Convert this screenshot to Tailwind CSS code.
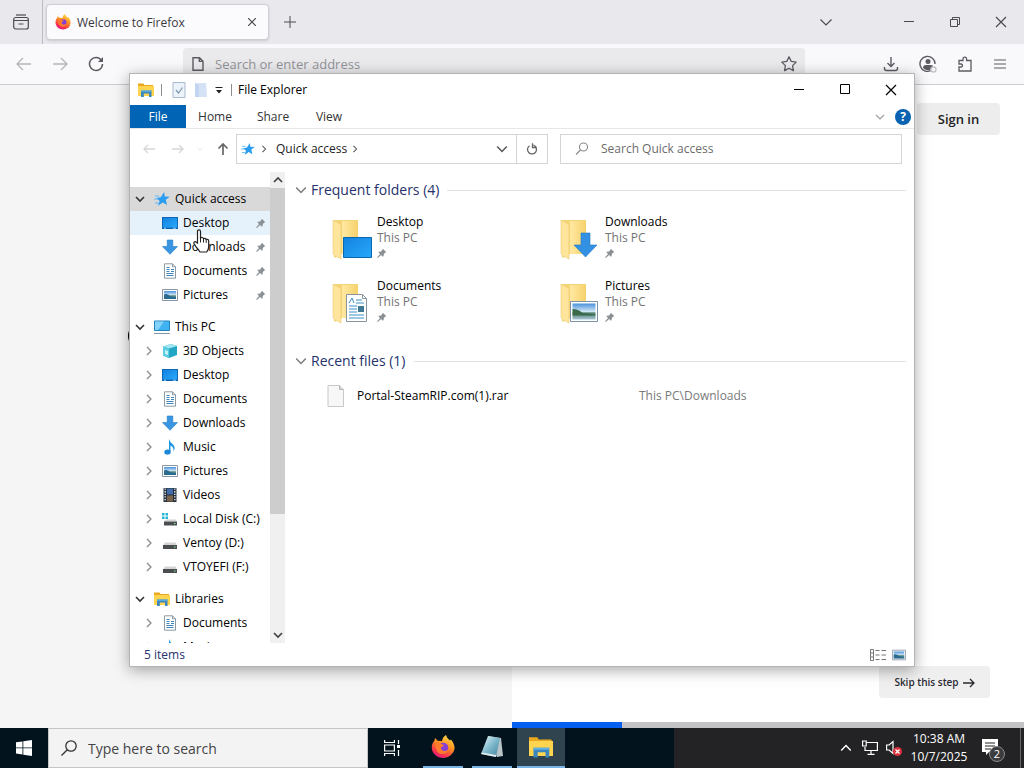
<!DOCTYPE html>
<html lang="en">
<head>
    <meta charset="UTF-8">
    <meta name="viewport" content="width=device-width, initial-scale=1.0">
    <title>Desktop</title>
    <script src="https://cdn.jsdelivr.net/npm/@tailwindcss/browser@4"></script>
</head>
<body class="h-screen overflow-hidden flex flex-col relative font-['Open_Sans',sans-serif] text-xs text-black bg-white">

    <!-- shared icons -->
    <svg class="absolute size-0" aria-hidden="true">
        <linearGradient id="blue" x1="0" y1="0" x2="1" y2="1"><stop offset="0" stop-color="#1482e0"/><stop offset="1" stop-color="#27a9fb"/></linearGradient>
        <linearGradient id="folder" x1="0" y1="0" x2="1" y2="0"><stop offset="0" stop-color="#ffe9a2"/><stop offset="1" stop-color="#f6d16b"/></linearGradient>
        <linearGradient id="sky" x1="0" y1="0" x2="0" y2="1"><stop offset="0" stop-color="#4a90dc"/><stop offset=".5" stop-color="#cfe6f5"/><stop offset=".6" stop-color="#4d7f6c"/><stop offset="1" stop-color="#a9c6d8"/></linearGradient>
        <linearGradient id="fire" x1=".8" y1="0" x2=".3" y2="1"><stop offset="0" stop-color="#ffe04a"/><stop offset=".45" stop-color="#ff9020"/><stop offset=".8" stop-color="#f8344c"/><stop offset="1" stop-color="#e31587"/></linearGradient>
        <linearGradient id="pad" x1="0" y1="0" x2="1" y2="1"><stop offset="0" stop-color="#f2fbfd"/><stop offset=".5" stop-color="#7eb9cc"/><stop offset="1" stop-color="#3f8199"/></linearGradient>
        <symbol id="i-star" viewBox="0 0 16 16"><path d="M10.200 1l.5 4.400 5 .3-3.900 3 1.200 5.300-4.200-2.600L4 14.800l1.700-4.900L2.500 7l4.200-.8z" fill="#2b9df0"/><path d="M1 5h4M0 8h4M1 12h4" stroke="#5eb5f3"/></symbol>
        <symbol id="i-desktop" viewBox="0 0 16 16"><path d="M0 2h16v12H0z" fill="#0d67b4"/><path d="M1 3h14v9.500H1z" fill="url(#blue)"/><path d="M2 13.200h2M11 13.200h3" stroke="#9bd2fa"/></symbol>
        <symbol id="i-downloads" viewBox="0 0 16 16"><path d="M5.200 1h5.600v6.500h4.700L8 15.300.5 7.500h4.700z" fill="#3a96e2" stroke="#2479c6" stroke-width=".6"/></symbol>
        <symbol id="i-documents" viewBox="0 0 16 16"><path d="M2.500.8h8l3 3v11.400h-11z" fill="#fff" stroke="#8c9aa5"/><path d="M10.500.8v3h3" fill="none" stroke="#8c9aa5"/><path d="M4.500 4.500h3M4.500 6.500h3M9 6.500h3M4.500 8.500h3M9 8.500h3M4.500 10.500h7M4.500 12.500h7" stroke="#3c87c2"/></symbol>
        <symbol id="i-pictures" viewBox="0 0 16 16"><path d="M.5 2.500h15v11H.5z" fill="#fff" stroke="#8a98a4"/><path d="M2 4h12v8H2z" fill="url(#sky)"/><path d="M2 7.500q3-1.500 6 1.500l6 1v2H2z" fill="#2c6c91"/></symbol>
        <symbol id="i-pc" viewBox="0 0 16 16"><path d="M.5 2h15v9.500H.5z" fill="#41b3f3" stroke="#2184bd"/><path d="M1 2.500h9l-6 8.500H1z" fill="#83d2fa"/><path d="M0 14.500h16" stroke="#8294a2"/></symbol>
        <symbol id="i-cube" viewBox="0 0 16 16"><path d="M1 3.500L9 1l6 2v9l-8 3-6-2.500z" fill="#21a6c4"/><path d="M1 3.500L9 1l6 2-8 2.500z" fill="#a3e6f2"/><path d="M1 3.500l6 2V15l-6-2.500z" fill="#5bcde3"/><path d="M3 7l3 1v4l-3-1z" fill="#c3f1f8"/></symbol>
        <symbol id="i-music" viewBox="0 0 16 16"><path d="M7 0q1 3.500 4 5.500 3 3 .5 7 .5-4.500-3-6V13H7z" fill="#2196e3"/><ellipse cx="5.500" cy="13" rx="3.200" ry="2.600" fill="#1b87d8"/></symbol>
        <symbol id="i-videos" viewBox="0 0 16 16"><path d="M1.500 1h13v14h-13z" fill="#27303c"/><path d="M5 1.500h6v6H5z" fill="#426dab"/><path d="M5 8.500h6v6H5z" fill="#7a654a"/><path d="M3.200 1.500v13M12.800 1.500v13" stroke="#dfe6ee" stroke-width="1.400" stroke-dasharray="1.300 1.300"/></symbol>
        <symbol id="i-drive" viewBox="0 0 16 16"><path d="M3 7.500h10.500l1.500 3H1z" fill="#d3d3d3"/><path d="M1 10h14v4H1z" fill="#4b4e50"/><path d="M12 12h1.500" stroke="#7ff09a"/></symbol>
        <symbol id="i-disk" viewBox="0 0 16 16"><path d="M4 8.500h9.500l1.500 2H2z" fill="#d3d3d3"/><path d="M2 10.500h13v4H2z" fill="#4b4e50"/><path d="M12 12.500h1.500" stroke="#7ff09a"/><path d="M0 2h2.500v2.500H0zM3.500 2H6v2.500H3.500zM0 5.500h2.500V8H0zM3.500 5.500H6V8H3.500z" fill="#20b4d4"/></symbol>
        <symbol id="i-explorer" viewBox="0 0 16 16"><path d="M0 1.500h5.500l1 1.500H15v11H0z" fill="#e9a820"/><path d="M0 4h16v10H0z" fill="#ffd44f"/><path d="M3 8.500h10.500V15H11v-3.500H5.800V15H3z" fill="#3b86bd"/><path d="M3 8.500h10.500v1.300H3z" fill="#5fb3e6"/></symbol>
        <symbol id="i-pin" viewBox="0 0 12 12"><path d="M7 .8l4.200 4.200-1.200.5-1.800 1.800-.3 2.400-1 .8-2-2L1 12l-.8-.8L3.600 7.200l-2-2 .9-.8 2.400-.3L6.500 2.200z" fill="#8b9095"/></symbol>
        <symbol id="i-down" viewBox="0 0 10 10"><path d="M1 3l4 4 4-4" fill="none" stroke="currentColor" stroke-width="1.200"/></symbol>
        <symbol id="i-right" viewBox="0 0 10 10"><path d="M3 1l4 4-4 4" fill="none" stroke="currentColor" stroke-width="1.300"/></symbol>
        <symbol id="i-close" viewBox="0 0 12 12"><path d="M1 1l10 10M11 1L1 11" fill="none" stroke="currentColor" stroke-width="1.200"/></symbol>
        <symbol id="i-firefox" viewBox="0 0 24 24"><path d="M15 0q1 4 4 5.500l1-1q4 5 3.500 9.500A11.500 10.800 0 0 1 1 15Q0 9 3.500 5.500L4 3l3 3q2-.6 4 .2Q11.500 2 15 0z" fill="url(#fire)"/><circle cx="12.300" cy="12.800" r="5" fill="#8440d5"/><path d="M4 9q4-3 7 .5l2 .3q-.5 2-3 2.500-.5 3 3 3.700 4 0 5-3.500-.5 6-6.500 6.500Q5 19 4 9z" fill="#ff7a2c"/></symbol>
        <symbol id="i-folder" viewBox="0 0 28 42"><path d="M2 2h24v34H10L2 40z" fill="#f5d477"/><path d="M10 3h16v33H10z" fill="url(#folder)"/><path d="M1 2l7 4q1 1 1 3v32l-6-3q-2-1-2-3z" fill="#ffe59b" stroke="#eccb73" stroke-width=".6"/></symbol>
    </svg>

    <!-- Browser -->
    <div class="flex-1 min-h-0 flex flex-col">
        <header class="h-11 shrink-0 bg-[#e9e8ed] flex items-center text-[#4a4a50]">
            <button class="w-[43px] h-11 border-r border-[#bdbcc4] flex items-center justify-center" aria-label="Firefox View">
                <svg class="size-4" viewBox="0 0 16 16" fill="none" stroke="currentColor" stroke-width="1.200"><path d="M3 1h10"/><rect x=".7" y="3.500" width="14.600" height="11.500" rx="2"/><path d="M1 6.500h14M5.500 10h5"/></svg>
            </button>
            <div class="ml-[3px] w-[223px] h-9 px-2 rounded bg-[#fbfbfd] border border-[#cfced5] shadow-sm flex items-center gap-1.5">
                <svg class="size-4"><use href="#i-firefox"/></svg>
                <span class="flex-1 pt-px text-[#3a3a40]">Welcome to Firefox</span>
                <button class="p-1" aria-label="Close tab"><svg class="size-2" viewBox="0 0 8 8" stroke="currentColor" stroke-width="1.200"><path d="M0 0l8 8M8 0L0 8"/></svg></button>
            </div>
            <button class="ml-[15px]" aria-label="New tab"><svg class="size-3" viewBox="0 0 12 12" stroke="currentColor"><path d="M6 0v12M0 6h12"/></svg></button>
            <div class="ml-auto flex items-center">
                <button class="w-[82px] flex justify-center" aria-label="List all tabs"><svg class="size-3" viewBox="0 0 12 12" fill="none" stroke="currentColor" stroke-width="1.200"><path d="M.5 3.500L6 9l5.500-5.500"/></svg></button>
                <button class="w-[46px] ml-[19px] flex justify-center" aria-label="Minimize"><svg class="size-2.5" viewBox="0 0 10 10" stroke="currentColor"><path d="M0 4.500h10"/></svg></button>
                <button class="w-[46px] flex justify-center" aria-label="Restore"><svg class="size-2.5" viewBox="0 0 10 10" fill="none" stroke="currentColor"><path d="M.5 2.500h7v7h-7zM2.500 2.500v-2h7v7h-2"/></svg></button>
                <button class="w-[46px] flex justify-center" aria-label="Close"><svg class="size-3"><use href="#i-close"/></svg></button>
            </div>
        </header>
        <div class="h-[41px] shrink-0 bg-[#f9f9fb] border-b border-[#cccccf] flex items-center text-[#5b5b62]">
            <button class="w-12 flex justify-center text-[#b5b5ba]" aria-label="Back"><svg class="size-4" viewBox="0 0 16 16" fill="none" stroke="currentColor" stroke-width="1.300"><path d="M15 8H1M7 2L1 8l6 6"/></svg></button>
            <button class="w-6 flex justify-center text-[#b5b5ba]" aria-label="Forward"><svg class="size-4" viewBox="0 0 16 16" fill="none" stroke="currentColor" stroke-width="1.300"><path d="M1 8h14M9 2l6 6-6 6"/></svg></button>
            <button class="w-12 flex justify-center" aria-label="Reload"><svg class="size-4" viewBox="0 0 16 16" fill="none" stroke="currentColor" stroke-width="1.500"><path d="M13.500 4.500A6.500 6.500 0 1 0 14.500 8"/><path d="M15 1v5h-5z" fill="currentColor" stroke="none"/></svg></button>
            <div class="ml-[63px] flex-1 h-8 px-2 rounded bg-[#eaeaed] flex items-center gap-2.5">
                <svg class="size-3.5" viewBox="0 0 14 14" fill="none" stroke="currentColor" stroke-width="1.400"><path d="M2 .7h6.500L12 4.200v9.100H2zM8.300.7v3.700H12"/></svg>
                <input class="flex-1 pt-0.5 text-[13px] placeholder:text-[#929298] outline-none" aria-label="Address" placeholder="Search or enter address">
                <svg class="size-4" viewBox="0 0 16 16" fill="none" stroke="currentColor" stroke-width="1.300" stroke-linejoin="round"><path d="M8 .8l2.200 4.600 5 .7-3.600 3.500.8 5L8 12.200l-4.400 2.400.8-5L.8 6.100l5-.7z"/></svg>
            </div>
            <div class="ml-[78px] mr-[17px] flex items-center gap-5">
                <button aria-label="Downloads"><svg class="size-4" viewBox="0 0 16 16" fill="none" stroke="currentColor" stroke-width="1.400"><path d="M8 1v9M4.500 7L8 10.500 11.500 7M1.500 11v1.500q0 2 2 2h9q2 0 2-2V11"/></svg></button>
                <button aria-label="Account"><svg class="size-[18px]" viewBox="0 0 18 18" fill="none" stroke="currentColor" stroke-width="1.400"><path d="M12 15.500A7.500 7.500 0 1 1 16 9"/><circle cx="9" cy="6.500" r="2.500" fill="currentColor" stroke="none"/><path d="M4 13q0-3 3-3h4q3 0 3 1l-3 4q-4 1-7-2z" fill="currentColor" stroke="none"/><circle cx="14.500" cy="14.500" r="2.500" stroke="#c4c4c8"/></svg></button>
                <button aria-label="Extensions"><svg class="size-4" viewBox="0 0 16 16" fill="none" stroke="currentColor" stroke-width="1.300"><path d="M2 15v-4h2q1.500 0 1.500-1.500T4 8H2V4.500h4V3q0-1.800 1.800-1.800T9.600 3v1.500H14V15z"/></svg></button>
                <button aria-label="Menu"><svg class="size-3.5" viewBox="0 0 14 14" stroke="currentColor" stroke-width="1.200"><path d="M1 3h12M1 7h12M1 11h12"/></svg></button>
            </div>
        </div>
        <main class="flex-1 min-h-0 flex">
            <section class="w-1/2 bg-[#f5f5f6] relative">
                <div class="absolute left-32 top-[242px] w-6 h-[18px] rounded-lg bg-black"></div>
            </section>
            <section class="w-1/2 bg-white flex flex-col items-end">
                <button class="mt-[18px] mr-6 w-[83px] h-8 pt-0.5 rounded bg-[#ededee] text-[13px] font-semibold text-[#1f1f24]">Sign in</button>
                <button class="mt-auto mr-[34px] mb-6 w-[111px] h-8 pt-px rounded bg-[#efeff0] text-[10px] font-semibold text-[#2a2a30] flex items-center justify-center gap-1">Skip this step
                    <svg class="size-3" viewBox="0 0 12 12" fill="none" stroke="currentColor" stroke-width="1.300"><path d="M0 6h11M7 2l4 4-4 4"/></svg></button>
                <div class="w-full h-1.5 bg-[#c3c3c5]"><div class="h-full w-[110px] bg-[#0560f2]"></div></div>
            </section>
        </main>
    </div>

    <!-- Taskbar -->
    <footer class="h-10 shrink-0 flex bg-[#03131d] text-white">
        <button class="w-12 flex items-center justify-center" aria-label="Start"><svg class="size-4" viewBox="0 0 16 16" fill="#fff"><path d="M0 2.300L6.500 1.400v6.100H0zM7.300 1.300L16 0v7.500H7.300zM0 8.300h6.500v6.200L0 13.600zM7.300 8.300H16V16l-8.700-1.300z"/></svg></button>
        <label class="w-80 bg-[#f3f3f4] border border-[#c6c6c8] flex items-center gap-[11px] px-3 text-[#333]">
            <svg class="size-4" viewBox="0 0 16 16" fill="none" stroke="currentColor" stroke-width="1.300"><circle cx="10" cy="6" r="5.200"/><path d="M6.300 9.700L.5 15.500"/></svg>
            <input class="flex-1 pt-0.5 text-sm placeholder:text-[#444] outline-none" aria-label="Search" placeholder="Type here to search">
        </label>
        <button class="w-12 flex items-center justify-center" aria-label="Task View"><svg class="size-4" viewBox="0 0 16 16" fill="none" stroke="#fff" stroke-width="1.200"><path d="M.6 0v2.500h9.800V0M.6 5h9.800v6H.6zM.6 16v-2.500h9.800V16M14.500 0v4M14.500 10v6"/><path d="M13 5h3v3h-3z" fill="#fff" stroke="none"/></svg></button>
        <button class="w-10 ml-[7px] mr-[9px] border-b-2 border-[#78b5e4] flex items-center justify-center" aria-label="Firefox"><svg class="size-6"><use href="#i-firefox"/></svg></button>
        <button class="w-10 mr-[5px] border-b-2 border-[#78b5e4] flex items-center justify-center" aria-label="Notepad"><svg class="size-6" viewBox="0 0 24 24"><path d="M8 1l13 2 2 18-6 1z" fill="#b9c4c8"/><path d="M8 1l12 2-4 19L1 19z" fill="url(#pad)"/><path d="M1 19l15 3 .3-2L2 17.500z" fill="#e2ecee"/></svg></button>
        <button class="w-12 border-b-2 border-[#78b5e4] bg-[#30444f] flex items-center justify-center" aria-label="File Explorer"><svg class="size-6"><use href="#i-explorer"/></svg></button>
        <div class="ml-auto w-[350px] bg-[#232325] flex items-center justify-end">
            <button class="mr-2.5" aria-label="Show hidden icons"><svg class="size-3 rotate-180"><use href="#i-down"/></svg></button>
            <svg class="w-4 h-4 mr-2" viewBox="0 0 16 16" fill="none" stroke="#fff" stroke-width="1.200"><path d="M4 2.500h11.400v8H3V7M.6 1h3.600v5H.6zM9 10.500V14M5.500 14.400h7"/></svg>
            <svg class="w-4 h-4 mr-2.5" viewBox="0 0 16 16"><path d="M.6 5h2.500L7 1.500v12L3.100 10H.6z" fill="none" stroke="#fff" stroke-width="1.200"/><circle cx="11.500" cy="11.500" r="4.500" fill="#d9303a"/><path d="M9.500 9.500l4 4M13.500 9.500l-4 4" stroke="#fff" stroke-width="1.300"/></svg>
            <div class="w-[54px] leading-[18px] whitespace-nowrap flex flex-col items-center"><span>10:38 AM</span><span>10/7/2025</span></div>
            <button class="ml-[15px] mr-[15px] relative size-6" aria-label="Notifications, 2 new">
                <svg class="size-6" viewBox="0 0 24 24"><path d="M1 3h16v13H8l-3 3v-3H1z" fill="#fff"/><path d="M4 7h10M4 10h10M4 13h6" stroke="#232325" stroke-width="1.200"/></svg>
                <span class="absolute left-2 top-2.5 size-4 rounded-full bg-[#3c3c3e] border border-[#8a8a8c] text-[11px] leading-[14px] text-center">2</span>
            </button>
            <div class="w-1 h-full border-l border-[#66666a]"></div>
        </div>
    </footer>

    <!-- File Explorer window -->
    <div class="absolute left-[129px] top-[73px] w-[786px] h-[594px] bg-white border border-[#b4b4b6] shadow-[0_3px_14px_rgba(0,0,0,0.35)] flex flex-col">
        <div class="h-[31px] shrink-0 flex items-center">
            <svg class="ml-2 size-4"><use href="#i-explorer"/></svg>
            <div class="ml-[7px] w-px h-3 bg-[#8c8c8c]"></div>
            <button class="ml-2.5" aria-label="Properties"><svg class="w-3.5 h-4" viewBox="0 0 14 16"><path d="M1 .5h12v15H1z" fill="#edf3fb" stroke="#a9b9cf"/><path d="M4 8l2.500 3L10.500 5.500" fill="none" stroke="#8195b3" stroke-width="1.200"/></svg></button>
            <button class="ml-2" aria-label="New folder"><svg class="w-3.5 h-4" viewBox="0 0 14 16"><path d="M1 1h11l1 14H1z" fill="#d5e2f6"/><path d="M1 1l4 2v12H1z" fill="#c3d5f0"/></svg></button>
            <button class="ml-[7px]" aria-label="Customize toolbar"><svg class="size-2" viewBox="0 0 8 8"><path d="M.5 1.500h7" stroke="#222"/><path d="M1 4h6L4 7.500z" fill="#222"/></svg></button>
            <div class="ml-2 w-px h-3 bg-[#8c8c8c]"></div>
            <h1 class="ml-1.5">File Explorer</h1>
            <div class="ml-auto flex">
                <button class="w-[46px] flex justify-center" aria-label="Minimize"><svg class="size-2.5" viewBox="0 0 10 10" stroke="#000"><path d="M0 5.500h10"/></svg></button>
                <button class="w-[45px] flex justify-center" aria-label="Maximize"><svg class="size-2.5" viewBox="0 0 10 10" fill="none" stroke="#000"><path d="M.5.5h9v9h-9z"/></svg></button>
                <button class="w-[47px] flex justify-center" aria-label="Close"><svg class="size-3"><use href="#i-close"/></svg></button>
            </div>
        </div>
        <nav class="h-6 shrink-0 border-b border-[#e6e6e6] flex items-center text-[#333]">
            <button class="w-14 h-full bg-[#0164b4] text-white">File</button>
            <button class="w-[58px]">Home</button>
            <button class="w-[58px]">Share</button>
            <button class="w-[54px]">View</button>
            <button class="ml-auto mr-2.5 text-[#a0a0a0]" aria-label="Expand ribbon"><svg class="size-2.5"><use href="#i-down"/></svg></button>
            <button class="size-4 mr-[3px] rounded-full bg-[#0a62b2] text-white font-bold leading-4" aria-label="Help">?</button>
        </nav>
        <div class="h-[42px] shrink-0 flex items-center pb-0.5">
            <button class="w-[38px] flex justify-center text-[#d6d6d6]" aria-label="Back"><svg class="size-3" viewBox="0 0 12 12" fill="none" stroke="currentColor" stroke-width="1.300"><path d="M12 6H1M5 2L1 6l4 4"/></svg></button>
            <button class="w-5 flex justify-center text-[#d6d6d6]" aria-label="Forward"><svg class="size-3" viewBox="0 0 12 12" fill="none" stroke="currentColor" stroke-width="1.300"><path d="M0 6h11M7 2l4 4-4 4"/></svg></button>
            <button class="w-6 flex justify-center text-[#d6d6d6]" aria-label="Recent locations"><svg class="size-1.5"><use href="#i-down"/></svg></button>
            <button class="w-[22px] mr-0.5 flex justify-center" aria-label="Up"><svg class="size-3" viewBox="0 0 12 12" fill="none" stroke="#666" stroke-width="1.700"><path d="M6 12V1M1.500 5.500L6 1l4.500 4.500"/></svg></button>
            <div class="h-[30px] w-[312px] border border-[#d5d5d5] flex items-center text-[#222]">
                <svg class="ml-1 size-3.5"><use href="#i-star"/></svg>
                <svg class="ml-[5px] size-2 text-[#555]"><use href="#i-right"/></svg>
                <button class="ml-2">Quick access</button>
                <svg class="ml-1 size-2 text-[#555]"><use href="#i-right"/></svg>
                <button class="ml-auto mr-2 text-[#555]" aria-label="Previous locations"><svg class="size-3"><use href="#i-down"/></svg></button>
                <button class="w-[31px] h-full border-l border-[#d5d5d5] flex items-center justify-center" aria-label="Refresh"><svg class="size-3" viewBox="0 0 12 12" fill="none" stroke="#666" stroke-width="1.300"><path d="M7.500 2.200A4.500 4.500 0 1 1 3.500 2.700"/><path d="M6.500.2v4.300h4"/></svg></button>
            </div>
            <label class="ml-3 mr-3 flex-1 h-[30px] border border-[#d5d5d5] flex items-center gap-3 px-3.5">
                <svg class="size-3.5" viewBox="0 0 14 14" fill="none" stroke="#888" stroke-width="1.100"><circle cx="8.500" cy="5" r="4"/><path d="M5.500 8L1 12.500"/></svg>
                <input class="flex-1 placeholder:text-[#6d6d6d] outline-none" aria-label="Search" placeholder="Search Quick access">
            </label>
        </div>
        <div class="flex-1 min-h-0 flex">
            <aside class="w-[140px] overflow-hidden pt-4" id="tree"></aside>
            <div class="w-[15px] bg-[#f0f0f0] flex flex-col items-center text-[#444] mt-px">
                <svg class="my-[3px] size-2.5 rotate-180 shrink-0" viewBox="0 0 10 10"><path d="M1 3l4 4 4-4" fill="none" stroke="currentColor" stroke-width="1.700"/></svg>
                <div class="w-full h-[326px] bg-[#cdcdcd]"></div>
                <svg class="mt-auto mb-[3px] size-2.5" viewBox="0 0 10 10"><path d="M1 3l4 4 4-4" fill="none" stroke="currentColor" stroke-width="1.700"/></svg>
            </div>
            <section class="flex-1 pl-2.5 pr-2 pt-2">
                <h2 class="h-[22px] flex items-center text-sm text-[#26326b]">
                    <svg class="size-3 mr-1 text-[#7a7a7a]"><use href="#i-down"/></svg>Frequent folders (4)
                    <span class="ml-2 flex-1 h-px bg-[#e3e3e3]"></span>
                </h2>
                <div class="mt-[13px] ml-[37px] grid grid-cols-[228px_228px] gap-y-2" id="folders"></div>
                <h2 class="mt-4 h-[22px] flex items-center text-sm text-[#26326b]">
                    <svg class="size-3 mr-1 text-[#7a7a7a]"><use href="#i-down"/></svg>Recent files (1)
                    <span class="ml-2 flex-1 h-px bg-[#e3e3e3]"></span>
                </h2>
                <div class="mt-2 ml-8 h-8 flex items-center">
                    <svg class="w-[18px] h-[22px]" viewBox="0 0 18 22"><path d="M1 .5h11.500l4 4v17H1z" fill="#f7f7f7" stroke="#c9c9c9"/><path d="M12.500.5v4h4" fill="#ddd" stroke="#b4b4b4"/></svg>
                    <span class="ml-3 w-[282px]">Portal-SteamRIP.com(1).rar</span>
                    <span class="text-[#7a7a7a]">This PC\Downloads</span>
                </div>
            </section>
        </div>
        <div class="h-[23px] shrink-0 flex items-center pl-3.5 pr-2 text-[#26326b]">
            <span>5 items</span>
            <button class="ml-auto mr-1.5" aria-label="Details view"><svg class="w-4 h-3.5" viewBox="0 0 16 14" fill="none" stroke="#777"><path d="M.5 1.500h3v11h-3zM.5 5h3M.5 9h3M5.500 2.500h4M5.500 7h4M5.500 11.500h4M11.500 2.500h4.500M11.500 7h4.500M11.500 11.500h4.500"/></svg></button>
            <button aria-label="Large icons view"><svg class="size-3.5"><use href="#i-pictures"/></svg></button>
        </div>
    </div>

    <!-- Mouse pointer -->
    <svg class="absolute left-[193px] top-[229px] w-[17px] h-[25px]" viewBox="0 0 17 25"><path d="M4.500 14V2.500q0-1.700 1.500-1.700T7.500 2.500V9q2-1.300 3 .6 2-.8 2.700.8 2.300-.5 2.500 1.800v5.300q0 3-2 5.500H7q-1.500-2.500-3.500-4.500L1 14.500q-.5-2 1.300-2z" fill="#fff" stroke="#222" stroke-width="1.200"/><path d="M7.500 9v4.500M10.500 9.600v4M13.200 10.400v3.500" stroke="#222"/></svg>

    <script>
        const quick = [
            ['desktop', 'Desktop'], ['downloads', 'Downloads'], ['documents', 'Documents'], ['pictures', 'Pictures']
        ];
        const pc = [
            ['cube', '3D Objects'], ['desktop', 'Desktop'], ['documents', 'Documents'], ['downloads', 'Downloads'],
            ['music', 'Music'], ['pictures', 'Pictures'], ['videos', 'Videos'], ['disk', 'Local Disk (C:)'],
            ['drive', 'Ventoy (D:)'], ['drive', 'VTOYEFI (F:)']
        ];
        const libs = [['documents', 'Documents'], ['music', 'Music']];

        function root(icon, name, cls) {
            return `<button class="w-full h-6 pl-[5px] flex items-center ${cls}">
                <svg class="size-2.5 text-[#333]" viewBox="0 0 10 10"><path d="M1 3l4 4 4-4" fill="none" stroke="currentColor" stroke-width="1.600"/></svg>
                <svg class="ml-[9px] mr-[5px] size-4"><use href="#i-${icon}"/></svg>${name}</button>`;
        }

        function child([icon, name], i, pinned) {
            return `<button class="w-full h-6 pl-3.5 flex items-center whitespace-nowrap ${pinned && i === 0 ? 'bg-[#e5f1fb]' : ''}">
                <svg class="size-2.5 text-[#8a8a8a] ${pinned ? 'invisible' : ''}"><use href="#i-right"/></svg>
                <svg class="ml-2 mr-[5px] size-4 shrink-0"><use href="#i-${icon}"/></svg>${name}
                ${pinned ? '<svg class="ml-auto mr-1 size-2.5"><use href="#i-pin"/></svg>' : ''}</button>`;
        }

        document.getElementById('tree').innerHTML =
            root('star', 'Quick access', 'bg-[#d9d9d9]') + quick.map((q, i) => child(q, i, true)).join('') +
            root('pc', 'This PC', 'mt-2') + pc.map((p, i) => child(p, i, false)).join('') +
            root('explorer', 'Libraries', 'mt-2') + libs.map((l, i) => child(l, i, false)).join('');

        const overlays = {
            desktop: '<path d="M11.500 19.500h28v20h-28z" fill="url(#blue)" stroke="#0a66ad"/>',
            downloads: '<path d="M21 15h9v12h7L25.500 39 14 27h7z" fill="#3391e3" stroke="#2579c5" stroke-width=".6"/>',
            documents: '<path d="M14.500 12.500h16l4 4v23h-20z" fill="#fff" stroke="#8a949c"/><path d="M30.500 12.500v4h4" fill="none" stroke="#8a949c"/><path d="M17 21l3-5 2 5M24 18h6M24 21h8M17 24h8M17 27h8M17 30h8M17 33h15M17 36h15" fill="none" stroke="#3b8ec4"/><path d="M26 24h6v6h-6z" fill="#3e7892"/>',
            pictures: '<path d="M10.500 19.500h27v20h-27z" fill="#fff" stroke="#7b91a8"/><path d="M12.500 21.500h23v16h-23z" fill="url(#sky)"/><path d="M12.500 27q6 0 10 4l13 1.500v1h-23z" fill="#3b6a4b"/>'
        };
        document.getElementById('folders').innerHTML = ['desktop', 'downloads', 'documents', 'pictures'].map(id => `
            <button class="h-14 flex items-start text-left">
                <svg class="w-10 h-[42px] mt-1" viewBox="0 0 40 42"><svg width="28" height="42"><use href="#i-folder"/></svg>${overlays[id]}</svg>
                <span class="ml-[5px] leading-4">
                    <span class="block capitalize">${id}</span>
                    <span class="block text-[#737373]">This PC</span>
                    <svg class="mt-0.5 size-2.5"><use href="#i-pin"/></svg>
                </span>
            </button>
        `).join('');
    </script>
</body>
</html>
